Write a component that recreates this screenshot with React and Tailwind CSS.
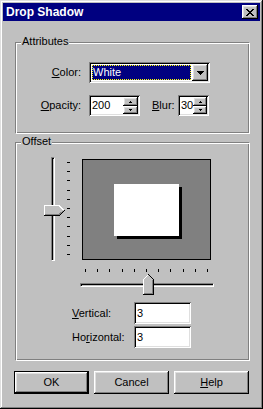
import React from 'react';

const raised = 'shadow-[inset_-1px_-1px_#000,inset_1px_1px_#fff,inset_-2px_-2px_#808080,inset_2px_2px_#dfdfdf]';
const sunken = 'shadow-[inset_1px_1px_#808080,inset_-1px_-1px_#fff,inset_2px_2px_#000,inset_-2px_-2px_#dfdfdf]';
const etched = 'border border-t-[#808080] border-l-[#808080] border-r-white border-b-white shadow-[inset_1px_1px_#fff,inset_-1px_-1px_#808080]';

const Pix = ({ w, h, d }) => (
  <svg width={w} height={h} viewBox={`0 0 ${w} ${h}`} shapeRendering="crispEdges">
    <path d={d} fill="#000" />
  </svg>
);

function Group({ title, className, children }) {
  return (
    <div className={`relative ${etched} ${className}`}>
      <span className="absolute -top-[8px] left-[5px] px-[1px] bg-[#c0c0c0] leading-[13px]">{title}</span>
      {children}
    </div>
  );
}

function Spin({ value, className }) {
  return (
    <div className={`h-[21px] bg-white ${sunken} p-[2px] flex ${className}`}>
      <div className="flex-1 pl-[1px] flex items-center">{value}</div>
      <div className="w-[15px] flex flex-col">
        <div className={`h-[9px] bg-[#c0c0c0] ${raised} flex items-center justify-center`}>
          <Pix w={3} h={2} d="M1 0h1v1H1zM0 1h3v1H0z" />
        </div>
        <div className={`h-[8px] bg-[#c0c0c0] ${raised} flex items-center justify-center`}>
          <Pix w={3} h={2} d="M0 0h3v1H0zM1 1h1v1H1z" />
        </div>
      </div>
    </div>
  );
}

function VSlider() {
  return (
    <div className="flex h-[104px]">
      <div className="relative w-[21px] h-full">
        <div className="ml-[7px] w-[4px] h-full border border-t-[#808080] border-l-[#808080] border-r-white border-b-white bg-[#c0c0c0] shadow-[inset_1px_1px_#000]" />
        <svg className="absolute left-0 top-[48px]" width="21" height="11" viewBox="0 0 21 11" shapeRendering="crispEdges">
          <polygon points="0,0 15,0 20,5 15,10 0,10" fill="#c0c0c0" />
          <polyline points="0.5,10 0.5,0.5 15,0.5 19.5,5" fill="none" stroke="#fff" />
          <polyline points="1,9.5 15,9.5 19.5,5.5" fill="none" stroke="#808080" />
          <polyline points="0,10.5 15.5,10.5 20.5,5.5" fill="none" stroke="#000" />
        </svg>
      </div>
      <div className="ml-[2px] w-[3px] flex flex-col justify-between pt-[5px] pb-[6px]">
        {Array.from({ length: 11 }).map((_, i) => (
          <div key={i} className="h-[1px] w-[3px] bg-black" />
        ))}
      </div>
    </div>
  );
}

function HSlider({ className }) {
  return (
    <div className={`relative w-[134px] h-[26px] flex flex-col ${className}`}>
      <div className="h-[3px] flex justify-between pl-[5px] pr-[6px]">
        {Array.from({ length: 11 }).map((_, i) => (
          <div key={i} className="w-[1px] h-[3px] bg-black" />
        ))}
      </div>
      <div className="mt-[11px] h-[4px] w-full border border-t-[#808080] border-l-[#808080] border-r-white border-b-white bg-[#c0c0c0] shadow-[inset_1px_1px_#000]" />
      <svg className="absolute left-[63px] top-[5px]" width="11" height="21" viewBox="0 0 11 21" shapeRendering="crispEdges">
        <polygon points="0,5 5,0 10,5 10,20 0,20" fill="#c0c0c0" />
        <polyline points="0.5,20 0.5,5.5 5,1" fill="none" stroke="#fff" />
        <polyline points="9.5,6 9.5,19.5 1,19.5" fill="none" stroke="#808080" />
        <polyline points="5.5,0.5 10.5,5.5 10.5,20.5 0,20.5" fill="none" stroke="#000" />
      </svg>
    </div>
  );
}

function Field({ label, value }) {
  return (
    <div className="flex items-center">
      <div className="w-[62px]">{label}</div>
      <div className={`w-[57px] h-[22px] bg-white ${sunken} pl-[3px] flex items-center`}>{value}</div>
    </div>
  );
}

function Button({ children, isDefault }) {
  return (
    <button
      className={`w-[75px] h-[23px] bg-[#c0c0c0] flex items-center justify-center ${raised} ${isDefault ? 'border border-black' : ''}`}
    >
      {children}
    </button>
  );
}

export default function App() {
  return (
    <div className="w-[263px] h-[409px] bg-[#c0c0c0] p-[3px] flex flex-col text-[11px] leading-[13px] text-black font-['Liberation_Sans',Arial,sans-serif] shadow-[inset_-1px_-1px_#000,inset_1px_1px_#dfdfdf,inset_-2px_-2px_#808080,inset_2px_2px_#fff]">
      <div className="h-[18px] bg-[#000080] flex items-center pl-[3px] pr-[2px]">
        <span className="flex-1 text-white font-bold text-[12px]">Drop Shadow</span>
        <div className={`w-[16px] h-[14px] bg-[#c0c0c0] ${raised} flex items-center justify-center`}>
          <Pix w={8} h={7} d="M0 0h2v1H0zM6 0h2v1H6zM1 1h2v1H1zM5 1h2v1H5zM2 2h4v1H2zM3 3h2v1H3zM2 4h4v1H2zM1 5h2v1H1zM5 5h2v1H5zM0 6h2v1H0zM6 6h2v1H6z" />
        </div>
      </div>

      <div className="flex flex-col pl-[12px]">
        <Group title="Attributes" className="mt-[21px] w-[235px] h-[92px]">
          <div className="flex items-center mt-[19px]">
            <div className="w-[65px] text-right"><span className="underline">C</span>olor:</div>
            <div className={`ml-[8px] w-[121px] h-[21px] bg-white ${sunken} p-[2px] flex`}>
              <div className="flex-1 my-[1px] ml-[1px] mr-[1px] bg-[#000080] text-white flex items-center pl-[1px] outline-1 outline-dotted outline-[#ffff00] -outline-offset-1">
                White
              </div>
              <div className={`w-[16px] h-[17px] bg-[#c0c0c0] ${raised} flex items-center justify-center`}>
                <Pix w={7} h={4} d="M0 0h7v1H0zM1 1h5v1H1zM2 2h3v1H2zM3 3h1v1H3z" />
              </div>
            </div>
          </div>
          <div className="flex items-center mt-[12px]">
            <div className="w-[65px] text-right"><span className="underline">O</span>pacity:</div>
            <Spin className="ml-[8px] w-[51px]" value="200" />
            <div className="ml-[12px] w-[26px]"><span className="underline">B</span>lur:</div>
            <Spin className="w-[31px]" value="30" />
          </div>
        </Group>

        <Group title="Offset" className="mt-[8px] w-[235px] h-[219px]">
          <div className="flex items-start mt-[14px] ml-[28px]">
            <VSlider />
            <div className="ml-[12px] mt-[2px] w-[129px] h-[101px] border border-black bg-[#808080] flex items-center justify-center">
              <div className="w-[65px] h-[52px] bg-white shadow-[3px_3px_0_#000]" />
            </div>
          </div>
          <HSlider className="ml-[64px] mt-[8px]" />
          <div className="flex flex-col gap-[2px] mt-[7px] ml-[56px]">
            <Field label={<><span className="underline">V</span>ertical:</>} value="3" />
            <Field label={<>Ho<span className="underline">r</span>izontal:</>} value="3" />
          </div>
        </Group>

        <div className="flex gap-[5px] mt-[10px] -ml-[1px]">
          <Button isDefault>OK</Button>
          <Button>Cancel</Button>
          <Button><span><span className="underline">H</span>elp</span></Button>
        </div>
      </div>
    </div>
  );
}
